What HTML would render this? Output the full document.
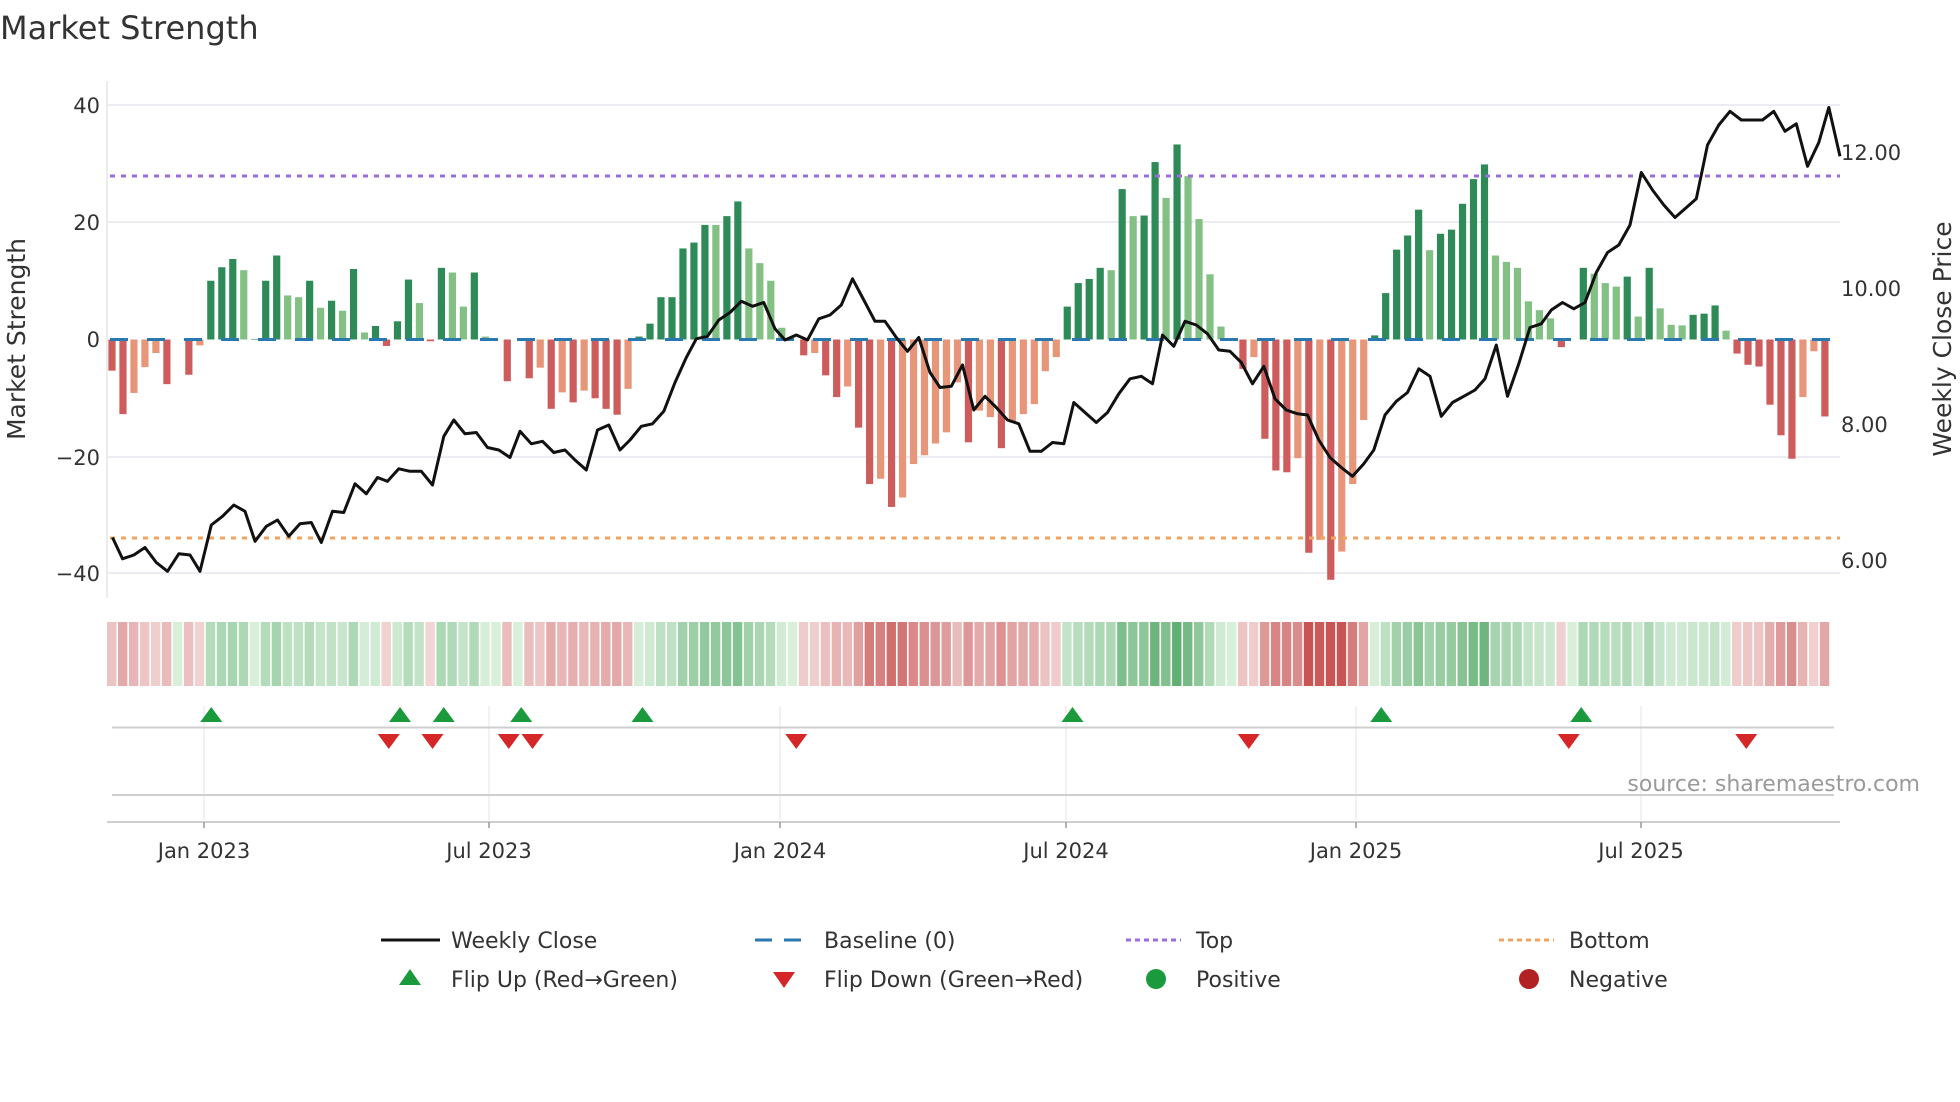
<!DOCTYPE html>
<html><head><meta charset="utf-8"><style>
html,body{margin:0;padding:0;background:#fff;width:1960px;height:1102px;overflow:hidden}
svg{display:block;font-family:"DejaVu Sans","Liberation Sans",sans-serif}
</style></head><body>
<svg id="s" width="1960" height="1102" viewBox="0 0 1960 1102" xmlns="http://www.w3.org/2000/svg">
<rect width="1960" height="1102" fill="#fff"/>
<text x="0" y="39" font-size="32" fill="#333">Market Strength</text>
<g stroke="#ececf2" stroke-width="2">
<line x1="107" y1="105" x2="1840" y2="105"/><line x1="107" y1="222" x2="1840" y2="222"/>
<line x1="107" y1="457" x2="1840" y2="457"/><line x1="107" y1="573" x2="1840" y2="573"/>
</g>
<line x1="107" y1="81" x2="107" y2="598" stroke="#e6e6ea" stroke-width="1.5"/>
<g font-size="21" fill="#333" text-anchor="end">
<text x="100" y="113">40</text><text x="100" y="230">20</text><text x="100" y="347">0</text>
<text x="100" y="465">−20</text><text x="100" y="581">−40</text>
</g>
<g font-size="21" fill="#333">
<text x="1841" y="160">12.00</text><text x="1841" y="296">10.00</text>
<text x="1841" y="432">8.00</text><text x="1841" y="568">6.00</text>
</g>
<text transform="translate(25,339) rotate(-90)" text-anchor="middle" font-size="25" fill="#333">Market Strength</text>
<text transform="translate(1951,339) rotate(-90)" text-anchor="middle" font-size="25" fill="#333">Weekly Close Price</text>
<g id="bars"></g>
<line x1="110" y1="339.5" x2="1840" y2="339.5" stroke="#2a78b0" stroke-width="3" stroke-dasharray="18 19"/>
<line x1="110" y1="176" x2="1840" y2="176" stroke="#9b6ee0" stroke-width="3" stroke-dasharray="5 6"/>
<line x1="110" y1="538" x2="1840" y2="538" stroke="#f0a460" stroke-width="3" stroke-dasharray="5 6"/>
<polyline id="price" fill="none" stroke="#111" stroke-width="3" stroke-linejoin="round"/>
<g id="heat"></g>
<g stroke="#eeeeee" stroke-width="1.5">
<line x1="204" y1="706" x2="204" y2="820"/><line x1="489" y1="706" x2="489" y2="820"/>
<line x1="780" y1="706" x2="780" y2="820"/><line x1="1066" y1="706" x2="1066" y2="820"/>
<line x1="1356" y1="706" x2="1356" y2="820"/><line x1="1641" y1="706" x2="1641" y2="820"/>
</g>
<line x1="112" y1="727.5" x2="1834" y2="727.5" stroke="#cfcfcf" stroke-width="2"/>
<line x1="112" y1="795" x2="1834" y2="795" stroke="#cfcfcf" stroke-width="2"/>
<line x1="107" y1="822" x2="1840" y2="822" stroke="#cfcfcf" stroke-width="2"/>
<g id="flips"></g>
<text x="1920" y="791" text-anchor="end" font-size="22" fill="#9a9a9a">source: sharemaestro.com</text>
<g stroke="#999" stroke-width="1.5">
<line x1="204" y1="822" x2="204" y2="828"/><line x1="489" y1="822" x2="489" y2="828"/>
<line x1="780" y1="822" x2="780" y2="828"/><line x1="1066" y1="822" x2="1066" y2="828"/>
<line x1="1356" y1="822" x2="1356" y2="828"/><line x1="1641" y1="822" x2="1641" y2="828"/>
</g>
<g font-size="21" fill="#333" text-anchor="middle">
<text x="204" y="858">Jan 2023</text><text x="489" y="858">Jul 2023</text>
<text x="780" y="858">Jan 2024</text><text x="1066" y="858">Jul 2024</text>
<text x="1356" y="858">Jan 2025</text><text x="1641" y="858">Jul 2025</text>
</g>
<g font-size="22" fill="#333">
<line x1="381" y1="940" x2="440" y2="940" stroke="#111" stroke-width="3"/>
<text x="451" y="948">Weekly Close</text>
<polygon points="410,969 399,985 421,985" fill="#1a9a3c"/>
<text x="451" y="987">Flip Up (Red→Green)</text>
<line x1="755" y1="940" x2="807" y2="940" stroke="#2a78b0" stroke-width="3" stroke-dasharray="17 12"/>
<text x="824" y="948">Baseline (0)</text>
<polygon points="784,988 773,972 795,972" fill="#d62728"/>
<text x="824" y="987">Flip Down (Green→Red)</text>
<line x1="1126" y1="940" x2="1181" y2="940" stroke="#9b6ee0" stroke-width="3" stroke-dasharray="5 4"/>
<text x="1196" y="948">Top</text>
<circle cx="1156" cy="979" r="10" fill="#1a9a3c"/>
<text x="1196" y="987">Positive</text>
<line x1="1499" y1="940" x2="1554" y2="940" stroke="#f0a460" stroke-width="3" stroke-dasharray="5 4"/>
<text x="1569" y="948">Bottom</text>
<circle cx="1529" cy="979" r="10" fill="#b22222"/>
<text x="1569" y="987">Negative</text>
</g>
</svg>
<script>
var V=[-5.3,-12.7,-9.1,-4.7,-2.3,-7.6,0,-6,-1,10,12.3,13.7,11.8,0.1,10,14.3,7.5,7.2,10,5.4,6.6,4.9,12,1.2,2.3,-1.1,3.1,10.2,6.2,-0.3,12.2,11.4,5.6,11.4,0.5,0,-7.1,0,-6.6,-4.8,-11.8,-9,-10.7,-8.7,-10,-11.8,-12.8,-8.4,0.5,2.7,7.2,7.2,15.5,16.5,19.5,19.5,21,23.5,15.5,13,10,2,0,
-2.7,-2.3,-6.1,-9.8,-8,-15,-24.6,-23.7,-28.5,-26.9,-21.2,-19.7,-17.7,-15.8,-7.3,-17.5,-12.1,-13.2,-18.5,-14.1,-12.7,-11,-5.4,-3,5.6,9.6,10.3,12.2,11.8,25.6,21,21.1,30.2,24.1,33.2,27.8,20.5,11.1,2.2,0,-5,-3,-16.9,-22.3,-22.6,-20.2,-36.3,-34.1,-40.9,-36.1,-24.6,-13.7,0.7,7.9,15.3,17.7,22.1,15.2,18,18.7,23.1,27.3,29.8,
14.3,13.2,12.2,6.5,5,3.6,-1.3,0,12.2,11.2,9.6,9,10.7,3.9,12.2,5.3,2.5,2.4,4.2,4.4,5.8,1.5,-2.4,-4.3,-4.6,-11.1,-16.3,-20.3,-9.8,-2,-13.1];
var L="DDLLLD0DL"+"DDDLDDDLLDLDLDLD"+"DDDLDDLLDL"+"0D0DLDLDLDDDL"+"DDDDDDDLDDLLLL0"+
"DLDDLDDLDL"+"LLLLLDLLDL"+"LLLLDDDDLD"+"LDDLDLLLL0"+"DLDDDLDLDL"+"LLDDDDDLDD"+"DDD"+
"LLLLLLD0DLLLDLDLLLDDDLDDDDDDLLD";
var x0=112,dx=10.98,sc=5.875,z=339.5,h='',hh='';
function mix(a,b,t){return 'rgb('+a.map(function(v,i){return Math.round(v+(b[i]-v)*t)}).join(',')+')'}
for(var i=0;i<V.length;i++){var v=V[i],x=x0+i*dx,f=L[i];
 if(Math.abs(v)>0.05){var c=v>0?(f=='L'?'#82c083':'#2e8b57'):(f=='L'?'#e8967a':'#cd5c5c');
  var y=v>0?z-v*sc:z,hgt=Math.abs(v)*sc;h+='<rect x="'+(x-3.6)+'" y="'+y+'" width="7.2" height="'+hgt+'" fill="'+c+'"/>';}
 var t=Math.min(Math.abs(v)/36,1);
 var col=v>=0?mix([216,239,218],[88,170,106],t):mix([242,214,214],[200,84,84],t);
 hh+='<rect x="'+(x-5)+'" y="622" width="9.4" height="64" fill="'+col+'"/>';}
document.getElementById('bars').innerHTML=h;document.getElementById('heat').innerHTML=hh;
var P=[90,430,98,447,107,444,116,438,125,450,134,457,143,443,152,444,160,457,169,420,178,413,187,404,196,409,204,433,213,421,222,416,231,429,240,419,249,418,257,434,266,409,275,410,284,387,293,395,302,382,310,385,319,375,328,377,337,377,346,388,355,349,363,336,372,347,381,346,390,358,399,360,408,366,416,345,425,355,434,353,443,362,452,360,460,368,469,376,478,344,487,340,496,360,504,352,513,341,522,339,531,329,540,306,549,286,557,271,566,269,575,256,584,250,593,241,602,245,611,242,620,263,628,272,637,268,646,272,655,255,664,252,673,244,682,223,691,240,700,257,708,257,717,270,726,281,735,270,744,298,752,310,761,309,770,292,779,328,788,317,797,326,806,336,815,339,824,361,833,361,842,354,851,355,859,322,868,330,877,338,886,330,895,315,904,303,913,301,922,307,930,268,939,277,948,257,957,260,966,267,975,280,984,281,993,290,1002,307,1011,293,1020,319,1029,328,1038,331,1046,332,1055,352,1064,366,1073,374,1082,381,1091,371,1099,360,1108,332,1117,321,1126,314,1135,295,1144,301,1153,333,1162,322,1171,317,1180,312,1188,303,1197,276,1206,317,1215,291,1224,262,1233,259,1241,248,1250,242,1259,247,1268,242,1277,218,1286,202,1295,196,1304,180,1313,138,1322,152,1331,164,1340,174,1348,167,1357,159,1366,116,1375,100,1384,89,1393,96,1401,96,1410,96,1419,89,1428,105,1437,99,1446,133,1455,114,1463,86,1472,125];
var pts=[];for(var k=0;k<P.length;k+=2)pts.push((P[k]*1.25).toFixed(1)+','+(P[k+1]*1.25).toFixed(1));
document.getElementById('price').setAttribute('points',pts.join(' '));
var up=[169,320,355,417,514,858,1105,1265],dn=[311,346,407,426,637,999,1255,1397],f='';
up.forEach(function(d){var x=d*1.25;f+='<polygon points="'+x+',707 '+(x-11)+',722 '+(x+11)+',722" fill="#1a9a3c"/>';});
dn.forEach(function(d){var x=d*1.25;f+='<polygon points="'+x+',749 '+(x-11)+',734 '+(x+11)+',734" fill="#d62728"/>';});
document.getElementById('flips').innerHTML=f;
</script>
</body></html>
